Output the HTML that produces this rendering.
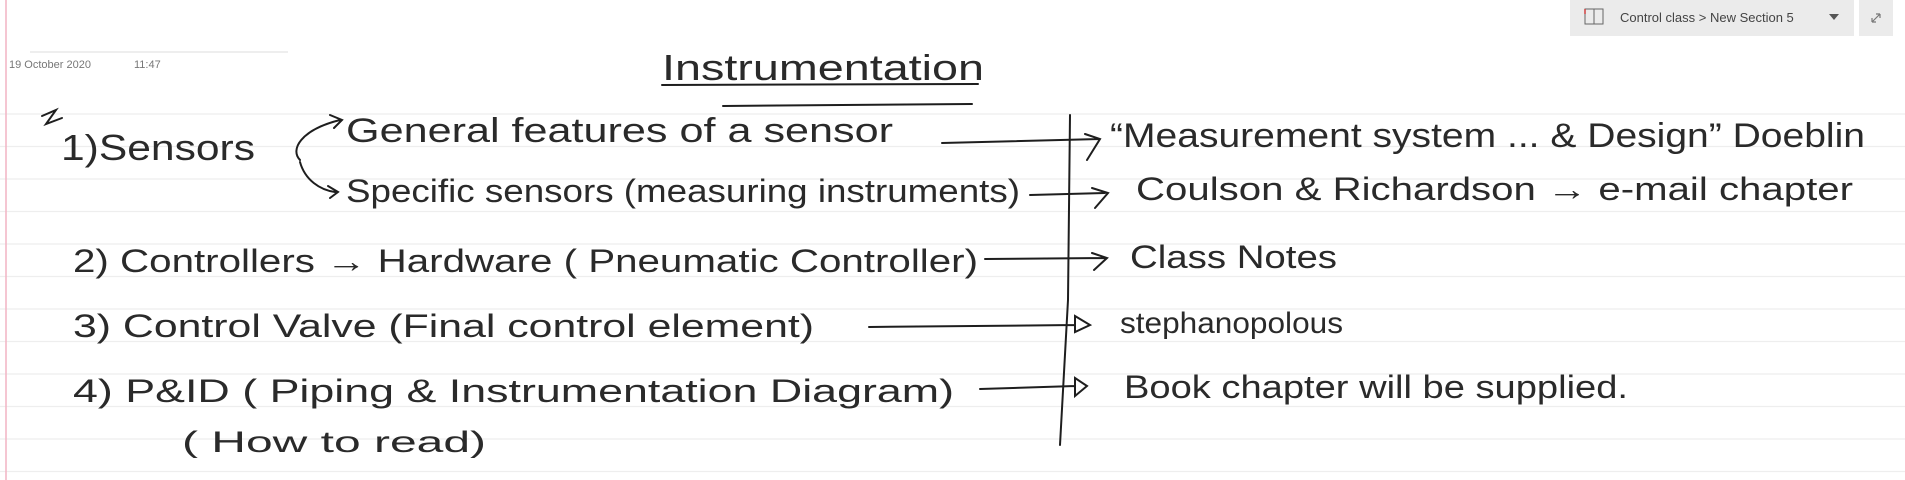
<!DOCTYPE html>
<html><head><meta charset="utf-8"><style>
html,body{margin:0;padding:0;background:#fff;width:1905px;height:480px;overflow:hidden;font-family:"Liberation Sans",sans-serif}
</style></head><body>
<svg width="1905" height="480" xmlns="http://www.w3.org/2000/svg" style="position:absolute;left:0;top:0">
<g stroke="#eeeeee" stroke-width="1.2">
<line x1="0" y1="114" x2="1905" y2="114"/><line x1="0" y1="146.5" x2="1905" y2="146.5"/>
<line x1="0" y1="179" x2="1905" y2="179"/><line x1="0" y1="211.5" x2="1905" y2="211.5"/>
<line x1="0" y1="244" x2="1905" y2="244"/><line x1="0" y1="276.5" x2="1905" y2="276.5"/>
<line x1="0" y1="309" x2="1905" y2="309"/><line x1="0" y1="341.5" x2="1905" y2="341.5"/>
<line x1="0" y1="374" x2="1905" y2="374"/><line x1="0" y1="406.5" x2="1905" y2="406.5"/>
<line x1="0" y1="439" x2="1905" y2="439"/><line x1="0" y1="471.5" x2="1905" y2="471.5"/>
</g>
<line x1="6" y1="0" x2="6" y2="480" stroke="#f2b3c4" stroke-width="1.5"/>
<line x1="30" y1="52" x2="288" y2="52" stroke="#eeeeee" stroke-width="2"/>
<text x="9" y="68" font-size="11" fill="#777">19 October 2020</text>
<text x="134" y="68" font-size="11" fill="#777">11:47</text>
<g fill="#2a2a2a" font-family="Liberation Sans, sans-serif">
<text x="662" y="80" font-size="36" textLength="322" lengthAdjust="spacingAndGlyphs">Instrumentation</text>
<text x="61" y="160" font-size="36" textLength="194" lengthAdjust="spacingAndGlyphs">1)Sensors</text>
<text x="346" y="142" font-size="34" textLength="547" lengthAdjust="spacingAndGlyphs">General features of a sensor</text>
<text x="346" y="202" font-size="32" textLength="674" lengthAdjust="spacingAndGlyphs">Specific sensors (measuring instruments)</text>
<text x="73" y="272" font-size="32" textLength="905" lengthAdjust="spacingAndGlyphs">2) Controllers → Hardware ( Pneumatic Controller)</text>
<text x="73" y="337" font-size="32" textLength="741" lengthAdjust="spacingAndGlyphs">3) Control Valve (Final control element)</text>
<text x="73" y="402" font-size="32" textLength="881" lengthAdjust="spacingAndGlyphs">4) P&amp;ID ( Piping &amp; Instrumentation Diagram)</text>
<text x="182" y="452" font-size="30" textLength="304" lengthAdjust="spacingAndGlyphs">( How  to read)</text>
<text x="1110" y="147" font-size="34" textLength="755" lengthAdjust="spacingAndGlyphs">“Measurement system ... &amp; Design” Doeblin</text>
<text x="1136" y="200" font-size="32" textLength="717" lengthAdjust="spacingAndGlyphs">Coulson &amp; Richardson → e-mail chapter</text>
<text x="1130" y="268" font-size="32" textLength="207" lengthAdjust="spacingAndGlyphs">Class Notes</text>
<text x="1120" y="333" font-size="30" textLength="223" lengthAdjust="spacingAndGlyphs">stephanopolous</text>
<text x="1124" y="398" font-size="32" textLength="504" lengthAdjust="spacingAndGlyphs">Book chapter will be supplied.</text>
</g>
<g stroke="#1e1e1e" stroke-width="2" fill="none" stroke-linecap="round">
<path d="M662 85 L978 84"/><path d="M723 106 L972 104"/>
<path d="M42 116 L56 110 L46 124 L62 118"/>
<path d="M300 160 C290 150 300 130 340 120 M330 115 L342 120 L334 128"/>
<path d="M300 162 C305 180 320 190 335 192 M328 186 L338 192 L330 198"/>
<path d="M1070 115 L1068 300 L1060 445"/>
<path d="M942 143 L1100 139 M1085 134 L1100 139 L1087 160"/>
<path d="M1030 195 L1105 193 M1092 188 L1108 193 L1095 208"/>
<path d="M985 259 L1105 258 M1092 253 L1107 258 L1094 270"/>
<path d="M869 327 L1075 325 M1075 316 L1090 325 L1075 332 Z"/>
<path d="M980 389 L1075 386 M1075 378 L1087 386 L1075 396 Z"/>
</g>
<rect x="1570" y="0" width="284" height="36" fill="#ebebeb"/>
<rect x="1859" y="0" width="34" height="36" fill="#ebebeb"/>
<rect x="1585" y="9" width="9" height="15" fill="none" stroke="#666" stroke-width="1"/>
<rect x="1594" y="9" width="9" height="15" fill="none" stroke="#666" stroke-width="1"/>
<line x1="1585" y1="9" x2="1585" y2="14" stroke="#d04040" stroke-width="1.5"/>
<text x="1620" y="22" font-size="13" fill="#444">Control class &gt; New Section 5</text>
<path d="M1829 14 L1839 14 L1834 20 Z" fill="#555"/>
<path d="M1872 22 L1880 14 M1872 22 L1872 18 M1872 22 L1876 22 M1880 14 L1880 18 M1880 14 L1876 14" stroke="#777" stroke-width="1.2" fill="none"/>
</svg>
</body></html>
